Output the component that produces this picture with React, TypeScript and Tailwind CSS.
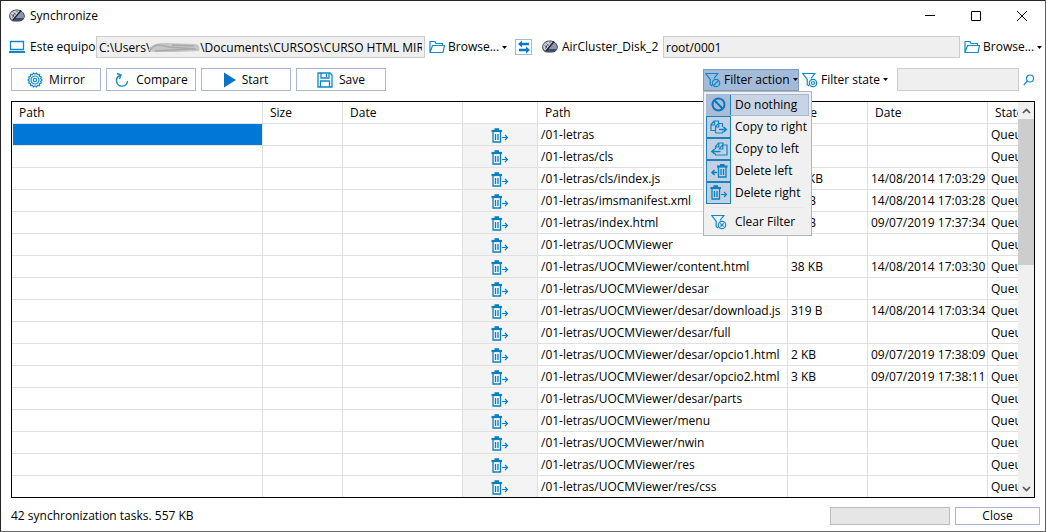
import { useState } from "react";
import clsx from "clsx";

type Entry = {
  path: string;
  size?: string;
  date?: string;
};

const entries: Entry[] = [
  { path: "/01-letras" },
  { path: "/01-letras/cls" },
  { path: "/01-letras/cls/index.js", size: "10 KB", date: "14/08/2014 17:03:29" },
  { path: "/01-letras/imsmanifest.xml", size: "9 KB", date: "14/08/2014 17:03:28" },
  { path: "/01-letras/index.html", size: "5 KB", date: "09/07/2019 17:37:34" },
  { path: "/01-letras/UOCMViewer" },
  { path: "/01-letras/UOCMViewer/content.html", size: "38 KB", date: "14/08/2014 17:03:30" },
  { path: "/01-letras/UOCMViewer/desar" },
  { path: "/01-letras/UOCMViewer/desar/download.js", size: "319 B", date: "14/08/2014 17:03:34" },
  { path: "/01-letras/UOCMViewer/desar/full" },
  { path: "/01-letras/UOCMViewer/desar/opcio1.html", size: "2 KB", date: "09/07/2019 17:38:09" },
  { path: "/01-letras/UOCMViewer/desar/opcio2.html", size: "3 KB", date: "09/07/2019 17:38:11" },
  { path: "/01-letras/UOCMViewer/desar/parts" },
  { path: "/01-letras/UOCMViewer/menu" },
  { path: "/01-letras/UOCMViewer/nwin" },
  { path: "/01-letras/UOCMViewer/res" },
  { path: "/01-letras/UOCMViewer/res/css" },
];

const filters = [
  { name: "Do nothing", icon: BanIcon },
  { name: "Copy to right", icon: CopyRightIcon },
  { name: "Copy to left", icon: CopyLeftIcon },
  { name: "Delete left", icon: TrashLeftIcon },
  { name: "Delete right", icon: TrashRightIcon },
];

function DiskIcon() {
  return (
    <svg width="16" height="14" viewBox="0 0 16 14" className="shrink-0" aria-hidden="true">
      <path d="M.7 6.500C1 3 4 1 8 1c4 0 7 2.500 7.300 6 0 3-2.300 5-5.300 5H5C2 12 .5 9.500.7 6.500Z" fill="#8b94a8" stroke="#343844" />
      <path d="M1.200 6C2 3 4.500 1.500 8 1.500l3 .5-7 8-2-.5Z" fill="#d3d5da" />
      <path d="M2.500 5.500 5 7.500M4.500 3.500l2.500 2M7.500 2l1.500 1.500M3.500 8.500l2-4" stroke="#4b4f58" />
      <path d="M5.500 9.500C7 6 9.500 4 12.500 4c1.500 1 2.300 2.500 2.300 5Z" fill="#8696b6" />
      <path d="M5 9h10c-.8 1.700-2.500 2.700-5 2.700H5Z" fill="#3d4a68" />
      <path d="M12 1.500 4 11" stroke="#1b1d24" strokeWidth="1.200" />
    </svg>
  );
}

function ComputerIcon() {
  return (
    <svg width="16" height="14" viewBox="0 0 16 14" fill="none" stroke="#0f86c9" className="shrink-0" aria-hidden="true">
      <path d="M1.500 1.500h13v8h-13z" strokeWidth="1.300" />
      <path d="M0 12h16" strokeWidth="2" />
    </svg>
  );
}

function FolderIcon() {
  return (
    <svg width="16" height="14" viewBox="0 0 16 14" fill="none" stroke="#1489cc" strokeWidth="1.200" className="shrink-0" aria-hidden="true">
      <path d="M1 12.500V1.500h5l1 2h6.500v2M1 12.500l2.500-7h12l-1.500 7Z" />
    </svg>
  );
}

function SwapIcon() {
  return (
    <svg width="13" height="14" viewBox="0 0 13 14" fill="#0a78c8" aria-hidden="true">
      <path d="M1 4 5 .500V2.700h7v2.600H5v2.200ZM13 10 9 6.500v2.200H2v2.600h7v2.200Z" />
    </svg>
  );
}

function GearIcon() {
  return (
    <svg width="16" height="16" viewBox="0 0 16 16" fill="none" stroke="#1489cc" strokeWidth="1.200" aria-hidden="true">
      <path d="M6.500 1 8 2 9.500 1l1 1.600 1.900-.2.100 1.900 1.800.7-.6 1.700L15 8l-1.300 1.300.6 1.700-1.800.7-.1 1.900-1.900-.2-1 1.600L8 14l-1.500 1-1-1.600-1.900.2-.1-1.900-1.800-.7.600-1.700L1 8l1.300-1.300L1.700 5l1.800-.7.1-1.900 1.900.2Z" />
      <circle cx="8" cy="8" r="4" />
      <circle cx="8" cy="8" r="1.700" />
    </svg>
  );
}

function RefreshIcon() {
  return (
    <svg width="16" height="16" viewBox="0 0 16 16" fill="none" stroke="#1489cc" strokeWidth="1.400" aria-hidden="true">
      <path d="M6 3.500A5.500 5.500 0 1 0 13.500 9" />
      <path d="M3 1.500 7 3 5.500 7" />
    </svg>
  );
}

function PlayIcon() {
  return (
    <svg width="12" height="16" viewBox="0 0 12 16" fill="#0a74c4" aria-hidden="true">
      <path d="M0 .5v15L12 8Z" />
    </svg>
  );
}

function SaveIcon() {
  return (
    <svg width="16" height="16" viewBox="0 0 16 16" fill="none" stroke="#0f86c9" strokeWidth="1.300" aria-hidden="true">
      <path d="M1 1h12l2 2v12H1ZM4 1v5h8V1M9.500 2v3M3.500 15V9h9v6" />
    </svg>
  );
}

function FunnelIcon({ mark }: { mark: "ban" | "dot" | "clear" }) {
  return (
    <svg width="16" height="16" viewBox="0 0 16 16" fill="none" stroke="#0f86c9" strokeWidth="1.200" className="shrink-0" aria-hidden="true">
      <path d="M7 14 5.200 12.500V7.500L.8 1.500h12L9 6.500" />
      <circle cx="11" cy="11" r="3.700" />
      {mark === "ban" && <path d="m8.500 13.500 5-5" />}
      {mark === "dot" && <circle cx="11" cy="11" r="1.500" />}
      {mark === "clear" && <path d="m9.300 9.300 3.400 3.400m0-3.400-3.400 3.400" />}
    </svg>
  );
}

function SearchIcon() {
  return (
    <svg width="12" height="12" viewBox="0 0 12 12" fill="none" stroke="#1489cc" strokeWidth="1.200" aria-hidden="true">
      <circle cx="7" cy="4.500" r="3.500" />
      <path d="M4.500 7 .8 11" />
    </svg>
  );
}

function BanIcon() {
  return (
    <svg width="15" height="15" viewBox="0 0 15 15" fill="none" stroke="#0a78c0" strokeWidth="2" aria-hidden="true">
      <circle cx="7.500" cy="7.500" r="6" />
      <path d="m3.300 3.300 8.400 8.400" />
    </svg>
  );
}

function CopyRightIcon() {
  return (
    <svg width="18" height="14" viewBox="0 0 18 14" fill="none" stroke="#0f86c9" strokeWidth="1.200" aria-hidden="true">
      <path d="M5 10.500H1v-6L4 1h4.500v2.500M5.500 13V6.500l3-3h4v3.500M4.500 1.500v3.500H1.500M8.800 4v3H6M5.500 13h7v-1.500" />
      <path d="M9 9.500h7M13.500 7l2.700 2.500-2.700 2.500" strokeWidth="1.700" />
    </svg>
  );
}

function CopyLeftIcon() {
  return (
    <svg width="18" height="14" viewBox="0 0 18 14" fill="none" stroke="#0f86c9" strokeWidth="1.200" aria-hidden="true">
      <path d="M5.500 7V4.500l3-3.500H13v2M9.500 7.500v-1l3-3.500H17v10H5.500v-1.500M12.800 3.500v3.500H10M8.800 1.500V5H6" />
      <path d="M10.500 9.500H2M4.700 7 2 9.500 4.700 12" strokeWidth="1.700" />
    </svg>
  );
}

function TrashLeftIcon() {
  return (
    <svg width="18" height="14" viewBox="0 0 18 14" fill="none" stroke="#0a80c4" aria-hidden="true">
      <path d="M7 2.500h10.500" strokeWidth="2.200" />
      <path d="M10 1h4.500" strokeWidth="2" />
      <path d="M8.500 3v10h7.500V3M11 5v6M13.500 5v6" strokeWidth="1.300" />
      <path d="M7 8.500H2M4.500 6 2 8.500 4.500 11" strokeWidth="1.500" />
    </svg>
  );
}

function TrashRightIcon() {
  return (
    <svg width="18" height="15" viewBox="0 0 18 15" fill="none" stroke="#0a80c4" className="inline-block" aria-hidden="true">
      <path d="M.5 3h10.500" strokeWidth="2.200" />
      <path d="M3.500 1.200h4.500" strokeWidth="2" />
      <path d="M2 4v10h7.500V4M4.500 6v6M7 6v6" strokeWidth="1.300" />
      <path d="M11 9.500h5.500M14 7l2.500 2.500L14 12" strokeWidth="1.200" />
    </svg>
  );
}

function Caret() {
  return (
    <svg width="5" height="3" viewBox="0 0 5 3" className="shrink-0" aria-hidden="true">
      <path d="M0 0h5L2.500 3Z" />
    </svg>
  );
}

function BrowseButton() {
  return (
    <button type="button" className="flex h-5 w-20 shrink-0 items-center gap-[3px] whitespace-nowrap">
      <FolderIcon />
      Browse...
      <Caret />
    </button>
  );
}

function ToolButton({ label, icon }: { label: string; icon: React.ReactNode }) {
  return (
    <button
      type="button"
      className="flex h-[23px] w-[90px] items-center justify-center gap-1.5 border border-[#a5b9d4] bg-white"
    >
      {icon}
      {label}
    </button>
  );
}

function TitleBar() {
  return (
    <header className="flex h-[29px] shrink-0 items-center justify-between pl-2">
      <div className="flex items-center gap-[5px]">
        <DiskIcon />
        <h1>Synchronize</h1>
      </div>
      <div className="flex h-full">
        <button type="button" aria-label="Minimize" className="flex w-[46px] items-center justify-center">
          <svg width="10" height="10" viewBox="0 0 10 10" stroke="#000">
            <path d="M0 4.500h10" />
          </svg>
        </button>
        <button type="button" aria-label="Maximize" className="flex w-[46px] items-center justify-center">
          <svg width="10" height="10" viewBox="0 0 10 10" fill="none" stroke="#000">
            <path d="M.5.5h9v9h-9z" />
          </svg>
        </button>
        <button type="button" aria-label="Close window" className="flex w-[46px] items-center justify-center">
          <svg width="10" height="10" viewBox="0 0 10 10" stroke="#000">
            <path d="m0 0 10 10M10 0 0 10" />
          </svg>
        </button>
      </div>
    </header>
  );
}

function FilterMenu() {
  return (
    <div
      role="menu"
      className="absolute top-full left-0 z-10 w-[109px] border border-[#b4b4b4] bg-[#f0f0f0] p-0.5"
    >
      {filters.map((item, i) => (
        <button
          key={item.name}
          type="button"
          role="menuitem"
          className={clsx(
            "flex h-[22px] w-full items-center gap-1 whitespace-nowrap",
            i === 0 && "bg-[#c8d3e4] outline -outline-offset-1 outline-[#a5b9d4]"
          )}
        >
          <span
            className={clsx(
              "flex h-full w-[25px] shrink-0 items-center justify-center border border-[#1b82bd]",
              i === 0 ? "bg-[#a9bdd8]" : "bg-[#c2d0e2]"
            )}
          >
            <item.icon />
          </span>
          {item.name}
        </button>
      ))}
      <div className="mx-1 my-[3px] border-t border-[#e8e8e8]" />
      <button type="button" role="menuitem" className="flex h-[22px] w-full items-center gap-1 whitespace-nowrap">
        <span className="flex w-[25px] shrink-0 justify-center">
          <FunnelIcon mark="clear" />
        </span>
        Clear Filter
      </button>
    </div>
  );
}

function TaskTable() {
  const head = "border-r border-b border-[#e0e0e0] pl-[7px] text-left font-normal";
  const cell = "border-r border-b border-[#e0e0e0] pl-[3px] whitespace-nowrap";

  return (
    <table className="w-[1040px] table-fixed border-separate border-spacing-0">
      <colgroup>
        <col className="w-[251px]" />
        <col className="w-[80px]" />
        <col className="w-[120px]" />
        <col className="w-[75px]" />
        <col className="w-[250px]" />
        <col className="w-[80px]" />
        <col className="w-[120px]" />
        <col />
      </colgroup>
      <thead>
        <tr className="h-[22px]">
          <th className={head}>Path</th>
          <th className={head}>Size</th>
          <th className={head}>Date</th>
          <th className={head} aria-label="Action" />
          <th className={head}>Path</th>
          <th className={head}>Size</th>
          <th className={head}>Date</th>
          <th className={head}>State</th>
        </tr>
      </thead>
      <tbody>
        {entries.map((entry, i) => (
          <tr key={entry.path} className="h-[22px]">
            <td className={clsx(cell, i === 0 && "border-l border-l-white bg-[#0078d7]")} />
            <td className={cell} />
            <td className={cell} />
            <td className="border-r border-b border-[#e0e0e0] bg-[#f4f4f4] pt-0.5 text-center leading-none">
              <TrashRightIcon />
            </td>
            <td className={cell}>{entry.path}</td>
            <td className={cell}>{entry.size}</td>
            <td className={cell}>{entry.date}</td>
            <td className={cell}>Queued</td>
          </tr>
        ))}
      </tbody>
    </table>
  );
}

export default function App() {
  const [menuOpen, setMenuOpen] = useState(true);

  return (
    <div className="flex h-screen flex-col border border-[#26262a] border-r-[#56606a] border-b-[#6a6a6a] bg-white font-['Open_Sans','Noto_Sans',sans-serif] text-xs leading-4 text-black">
      <TitleBar />

      <div className="mt-1.5 flex h-[22px] shrink-0 items-center pr-px pl-2">
        <ComputerIcon />
        <label htmlFor="local" className="ml-[5px] w-[66px] shrink-0 whitespace-nowrap">
          Este equipo
        </label>
        <div className="relative mr-1 h-full min-w-0 grow basis-[329px]">
          <input
            id="local"
            readOnly
            defaultValue={"C:\\Users\\" + " ".repeat(16) + "\\Documents\\CURSOS\\CURSO HTML MIRIAM"}
            className="h-full w-full border border-[#ccc] bg-[#efefef] px-0.5 outline-none"
          />
          {/* redacted user name */}
          <svg width="52" height="12" viewBox="0 0 52 12" className="absolute top-1.5 left-[52px]" aria-hidden="true">
            <path d="M0 8C5 1 10 1 18 1l30 1c3 1 4 4 3 7l-22 1H5Z" fill="#c6c6c6" />
            <path d="M1 9C7 1 13 3 21 5l27 2M7 9l36-2M24 3l22 1" stroke="#a9a9a9" strokeWidth="1.500" fill="none" />
          </svg>
        </div>
        <BrowseButton />
        <button
          type="button"
          aria-label="Swap sides"
          className="mr-[10px] ml-1.5 flex h-4 w-[17px] shrink-0 items-center justify-center border border-[#a5b9d4]"
        >
          <SwapIcon />
        </button>
        <DiskIcon />
        <label htmlFor="remote" className="ml-1 w-[101px] shrink-0 whitespace-nowrap">
          AirCluster_Disk_2
        </label>
        <input
          id="remote"
          readOnly
          defaultValue="root/0001"
          className="mr-1 h-full min-w-0 grow basis-[297px] border border-[#ccc] bg-[#efefef] px-0.5 outline-none"
        />
        <BrowseButton />
      </div>

      <div className="mt-[10px] flex h-[23px] shrink-0 items-center justify-between pr-2.5 pl-[10px]">
        <div className="flex gap-[5px]">
          <ToolButton label="Mirror" icon={<GearIcon />} />
          <ToolButton label="Compare" icon={<RefreshIcon />} />
          <ToolButton label="Start" icon={<PlayIcon />} />
          <ToolButton label="Save" icon={<SaveIcon />} />
        </div>
        <div className="flex items-center">
          <div className="relative">
            <button
              type="button"
              aria-haspopup="menu"
              aria-expanded={menuOpen}
              onClick={() => setMenuOpen(!menuOpen)}
              className="flex h-[22px] w-24 items-center gap-[3px] border border-[#7d9cc4] bg-[#a3bbd9] pl-px whitespace-nowrap"
            >
              <FunnelIcon mark="ban" />
              Filter action
              <Caret />
            </button>
            {menuOpen && <FilterMenu />}
          </div>
          <button type="button" className="flex h-[22px] w-[98px] items-center gap-[3px] pl-[3px] whitespace-nowrap">
            <FunnelIcon mark="dot" />
            Filter state
            <Caret />
          </button>
          <input
            type="text"
            aria-label="Search"
            className="h-[23px] w-[122px] border border-[#ccc] bg-[#efefef] px-0.5 outline-none"
          />
          <button type="button" aria-label="Find" className="ml-1 flex h-5 w-3 items-center">
            <SearchIcon />
          </button>
        </div>
      </div>

      <main className="mx-[10px] mt-[10px] flex min-h-0 flex-1 border border-black">
        <div className="min-w-0 flex-1 overflow-hidden">
          <TaskTable />
        </div>
        <div className="flex w-4 shrink-0 flex-col bg-[#f0f0f0]" aria-hidden="true">
          <div className="flex h-[17px] items-center justify-center">
            <svg width="9" height="6" viewBox="0 0 9 6" fill="none" stroke="#555" strokeWidth="1.700">
              <path d="m1 5 3.500-3.500L8 5" />
            </svg>
          </div>
          <div className="h-[146px] bg-[#cdcdcd]" />
          <div className="flex-1" />
          <div className="flex h-[17px] items-center justify-center">
            <svg width="9" height="6" viewBox="0 0 9 6" fill="none" stroke="#555" strokeWidth="1.700">
              <path d="m1 1 3.500 3.500L8 1" />
            </svg>
          </div>
        </div>
      </main>

      <footer className="flex h-[33px] shrink-0 items-center justify-between pt-1.5 pr-[5px] pb-1 pl-[10px]">
        <p>42 synchronization tasks. 557 KB</p>
        <div className="flex items-center gap-[5px]">
          <div role="progressbar" aria-label="Progress" className="h-[18px] w-[120px] border border-[#bcbcbc] bg-[#e6e6e6]" />
          <button type="button" className="h-[18px] w-[85px] border border-[#a5b9d4] bg-white">
            Close
          </button>
        </div>
      </footer>
    </div>
  );
}
